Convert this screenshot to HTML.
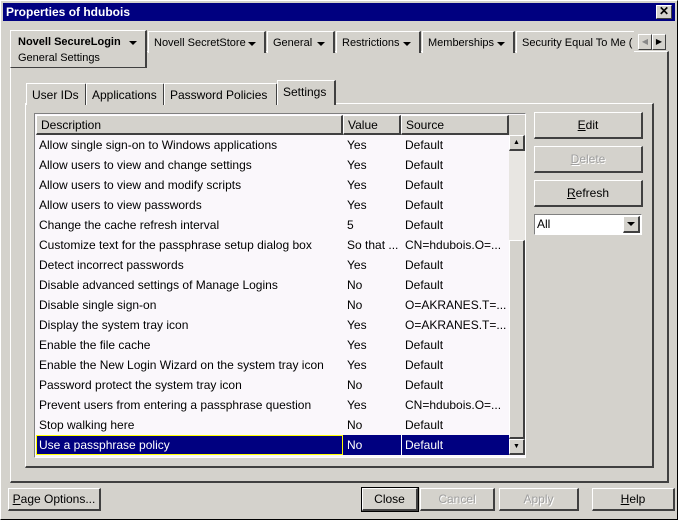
<!DOCTYPE html>
<html><head><style>
*{box-sizing:border-box;margin:0;padding:0}
body{width:678px;height:520px;overflow:hidden;background:#d4d2cc;font-family:"Liberation Sans",Arial,sans-serif;font-size:12px;color:#000;position:relative}
.a{position:absolute}
.out{border-top:1px solid #fff;border-left:1px solid #fff;border-right:1px solid #404040;border-bottom:1px solid #404040}
.in{border-top:1px solid #808080;border-left:1px solid #808080;border-right:1px solid #fff;border-bottom:1px solid #fff}
.btn{position:absolute;border-top:1px solid #fff;border-left:1px solid #fff;border-right:2px solid #404040;border-bottom:2px solid #404040;text-align:center;font-size:12px;background:#d4d2cc}
.dis{color:#a0a0a0;text-shadow:1px 1px 0 #fff}
.tab{position:absolute;border-top:1px solid #fff;border-left:1px solid #fff;border-right:2px solid #404040;height:22px;padding:4px 5px 0;font-size:12px;white-space:nowrap;background:#d4d2cc;overflow:hidden}
.top{font-size:11px;padding-top:5px}
.arr{display:inline-block;width:0;height:0;border-left:4px solid transparent;border-right:4px solid transparent;border-top:4px solid #000}
.tab .arr{position:absolute;right:8px;top:10px}
.row{position:absolute;left:0;width:473px;height:20px;font-size:12px;line-height:21px}
.row span{position:absolute;top:0;white-space:nowrap}
.hd{position:absolute;top:0;height:20px;line-height:18px;padding-left:4px;border-top:1px solid #fff;border-left:1px solid #fff;border-right:2px solid #404040;border-bottom:2px solid #404040;background:#d4d2cc}
u{text-decoration:underline}
</style></head><body>
<div class="a" style="left:0;top:0;width:678px;height:520px;border:1px solid #fff;border-right-color:#000;border-bottom-color:#000"></div>
<div class="a" style="left:3px;top:3px;width:672px;height:18px;background:#000080;color:#fff;font-weight:bold;font-size:12px;line-height:18px;padding-left:3px">Properties of hdubois</div>
<div class="a out" style="left:656px;top:5px;width:16px;height:14px;background:#d4d2cc;font-size:12px;line-height:11px;text-align:center;font-weight:bold">✕</div>

<div class="a out" style="left:10px;top:51px;width:659px;height:432px;border-right:2px solid #404040;border-bottom:2px solid #404040"></div>
<div class="tab top" style="left:10px;top:30px;width:137px;height:38px;border-bottom:1px solid #404040;padding-left:7px"><b>Novell SecureLogin</b><span class="arr"></span><div style="margin-top:4px">General Settings</div></div>
<div class="tab top" style="left:148px;top:31px;width:118px">Novell SecretStore<span class="arr"></span></div>
<div class="tab top" style="left:267px;top:31px;width:68px">General<span class="arr"></span></div>
<div class="tab top" style="left:336px;top:31px;width:85px">Restrictions<span class="arr"></span></div>
<div class="tab top" style="left:422px;top:31px;width:93px">Memberships<span class="arr"></span></div>
<div class="tab top" style="left:516px;top:31px;width:118px;border-right:none">Security Equal To Me (</div>
<div class="a out" style="left:638px;top:34px;width:14px;height:16px;color:#888;font-size:8px;line-height:14px;text-align:center">◀</div>
<div class="a out" style="left:652px;top:34px;width:14px;height:16px;font-size:8px;line-height:14px;text-align:center">▶</div>

<div class="a out" style="left:25px;top:103px;width:629px;height:365px;border-right:2px solid #404040;border-bottom:2px solid #404040"></div>
<div class="tab" style="left:26px;top:83px;width:61px">User IDs</div>
<div class="tab" style="left:86px;top:83px;width:79px">Applications</div>
<div class="tab" style="left:164px;top:83px;width:114px">Password Policies</div>
<div class="tab" style="left:277px;top:80px;width:59px;height:25px;border-bottom:none">Settings</div>

<div class="a in" style="left:34px;top:113px;width:492px;height:345px;background:#faf7fb"></div>
<div class="hd" style="left:36px;top:115px;width:307px">Description</div>
<div class="hd" style="left:343px;top:115px;width:58px">Value</div>
<div class="hd" style="left:401px;top:115px;width:108px">Source</div>
<div class="a" style="left:509px;top:115px;width:16px;height:20px;background:#d4d2cc"></div>
<div class="a" style="left:509px;top:135px;width:16px;height:320px;background:#e8e6e2"></div>
<div class="a out" style="left:509px;top:135px;width:16px;height:16px;border-right:2px solid #404040;border-bottom:2px solid #404040;background:#d4d2cc;font-size:7px;line-height:13px;text-align:center">▲</div>
<div class="a out" style="left:509px;top:240px;width:16px;height:199px;border-right:2px solid #404040;border-bottom:2px solid #404040;background:#d4d2cc"></div>
<div class="a out" style="left:509px;top:439px;width:16px;height:16px;border-right:2px solid #404040;border-bottom:2px solid #404040;background:#d4d2cc;font-size:7px;line-height:13px;text-align:center">▼</div>

<div class="a" style="left:36px;top:135px">
<div class="row" style="top:0"><span style="left:3px">Allow single sign-on to Windows applications</span><span style="left:311px">Yes</span><span style="left:369px">Default</span></div>
<div class="row" style="top:20px"><span style="left:3px">Allow users to view and change settings</span><span style="left:311px">Yes</span><span style="left:369px">Default</span></div>
<div class="row" style="top:40px"><span style="left:3px">Allow users to view and modify scripts</span><span style="left:311px">Yes</span><span style="left:369px">Default</span></div>
<div class="row" style="top:60px"><span style="left:3px">Allow users to view passwords</span><span style="left:311px">Yes</span><span style="left:369px">Default</span></div>
<div class="row" style="top:80px"><span style="left:3px">Change the cache refresh interval</span><span style="left:311px">5</span><span style="left:369px">Default</span></div>
<div class="row" style="top:100px"><span style="left:3px">Customize text for the passphrase setup dialog box</span><span style="left:311px">So that ...</span><span style="left:369px">CN=hdubois.O=...</span></div>
<div class="row" style="top:120px"><span style="left:3px">Detect incorrect passwords</span><span style="left:311px">Yes</span><span style="left:369px">Default</span></div>
<div class="row" style="top:140px"><span style="left:3px">Disable advanced settings of Manage Logins</span><span style="left:311px">No</span><span style="left:369px">Default</span></div>
<div class="row" style="top:160px"><span style="left:3px">Disable single sign-on</span><span style="left:311px">No</span><span style="left:369px">O=AKRANES.T=...</span></div>
<div class="row" style="top:180px"><span style="left:3px">Display the system tray icon</span><span style="left:311px">Yes</span><span style="left:369px">O=AKRANES.T=...</span></div>
<div class="row" style="top:200px"><span style="left:3px">Enable the file cache</span><span style="left:311px">Yes</span><span style="left:369px">Default</span></div>
<div class="row" style="top:220px"><span style="left:3px">Enable the New Login Wizard on the system tray icon</span><span style="left:311px">Yes</span><span style="left:369px">Default</span></div>
<div class="row" style="top:240px"><span style="left:3px">Password protect the system tray icon</span><span style="left:311px">No</span><span style="left:369px">Default</span></div>
<div class="row" style="top:260px"><span style="left:3px">Prevent users from entering a passphrase question</span><span style="left:311px">Yes</span><span style="left:369px">CN=hdubois.O=...</span></div>
<div class="row" style="top:280px"><span style="left:3px">Stop walking here</span><span style="left:311px">No</span><span style="left:369px">Default</span></div>
<div class="row" style="top:300px;background:#000080;color:#fff"><div class="a" style="left:0;top:0;width:307px;height:20px;border:1px solid #ff0"></div><span style="left:3px">Use a passphrase policy</span><span style="left:311px">No</span><span style="left:369px">Default</span><div class="a" style="left:365px;top:0;width:1px;height:20px;background:#fff"></div></div>
</div>

<div class="btn" style="left:534px;top:112px;width:109px;height:27px;line-height:24px"><u>E</u>dit</div>
<div class="btn dis" style="left:534px;top:146px;width:109px;height:27px;line-height:24px"><u>D</u>elete</div>
<div class="btn" style="left:534px;top:180px;width:109px;height:27px;line-height:24px"><u>R</u>efresh</div>
<div class="a in" style="left:534px;top:214px;width:108px;height:21px;background:#fff;padding:2px 0 0 2px">All</div>
<div class="a out" style="left:623px;top:216px;width:17px;height:17px;background:#d4d2cc;border-right:2px solid #404040;border-bottom:2px solid #404040"><span class="arr" style="margin:5px 0 0 3px;display:block"></span></div>

<div class="btn" style="left:8px;top:488px;width:93px;height:23px;line-height:21px"><u>P</u>age Options...</div>
<div class="btn" style="left:362px;top:488px;width:56px;height:23px;line-height:21px;outline:1px solid #000">Close</div>
<div class="btn dis" style="left:420px;top:488px;width:75px;height:23px;line-height:21px">Cancel</div>
<div class="btn dis" style="left:499px;top:488px;width:80px;height:23px;line-height:21px">Apply</div>
<div class="btn" style="left:592px;top:488px;width:83px;height:23px;line-height:21px"><u>H</u>elp</div>
</body></html>
